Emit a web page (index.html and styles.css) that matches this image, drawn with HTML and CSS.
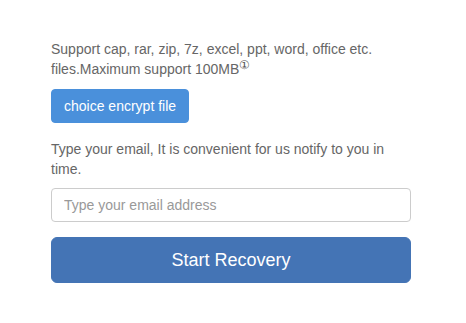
FILE: index.html
```html
<!DOCTYPE html>
<html>
<head>
<meta charset="utf-8">
<link rel="stylesheet" href="styles.css">
</head>
<body>
<div class="panel">
  <p class="note">Support cap, rar, zip, 7z, excel, ppt, word, office etc. files.Maximum support 100MB<sup class="mark">①</sup></p>
  <button class="btn-file" type="button">choice encrypt file</button>
  <p class="note note-email">Type your email, It is convenient for us notify to you in time.</p>
  <input class="email" type="text" placeholder="Type your email address">
  <button class="btn-start" type="button">Start Recovery</button>
</div>
</body>
</html>
```
FILE: styles.css
```css
html, body {
  margin: 0;
  padding: 0;
  background: #ffffff;
}
body {
  font-family: "Liberation Sans", Arial, sans-serif;
  font-size: 14px;
  line-height: 20px;
  color: #666666;
}
.panel {
  width: 360px;
  margin-left: 51px;
  padding-top: 39px;
  display: flex;
  flex-direction: column;
  align-items: flex-start;
}
.note {
  margin: 0;
}
.mark {
  font-size: 12px;
  line-height: 0;
  position: relative;
  vertical-align: baseline;
  top: -5px;
  color: #555;
}
.btn-file {
  box-sizing: border-box;
  margin-top: 10px;
  height: 34px;
  padding: 0 12px;
  border: 1px solid #4a90db;
  border-radius: 4px;
  background: #4a90db;
  color: #ffffff;
  font-family: "Liberation Sans", Arial, sans-serif;
  font-size: 14px;
  line-height: 20px;
  white-space: nowrap;
}
.note-email {
  margin-top: 16px;
}
.email {
  box-sizing: border-box;
  margin-top: 9px;
  width: 360px;
  height: 34px;
  padding: 6px 12px;
  border: 1px solid #cccccc;
  border-radius: 4px;
  font-family: "Liberation Sans", Arial, sans-serif;
  font-size: 14px;
  color: #555;
  outline: none;
}
.email::placeholder {
  color: #999999;
}
.btn-start {
  box-sizing: border-box;
  margin-top: 15px;
  width: 360px;
  height: 46px;
  border: 1px solid #4474b5;
  border-radius: 6px;
  background: #4474b5;
  color: #ffffff;
  font-family: "Liberation Sans", Arial, sans-serif;
  font-size: 18px;
  line-height: 24px;
}
```
